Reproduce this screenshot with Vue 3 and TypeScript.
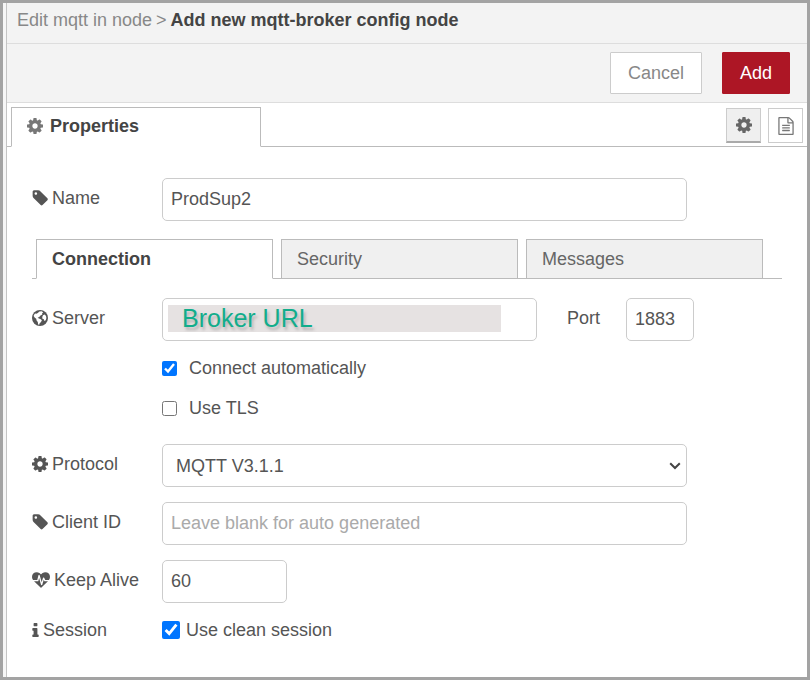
<script setup lang="ts">
import { ref } from 'vue'

const ICONS = {
  cog: 'M1152 896q0-106-75-181t-181-75-181 75-75 181 75 181 181 75 181-75 75-181zm512-109v222q0 12-8 23t-20 13l-185 28q-19 54-39 91 35 50 107 138 10 12 10 25t-9 23q-27 37-99 108t-94 71q-12 0-26-9l-138-108q-44 23-91 38-16 136-29 186-7 28-36 28h-222q-14 0-24.5-8.5t-11.5-21.5l-28-184q-49-16-90-37l-141 107q-10 9-25 9-14 0-25-11-126-114-165-168-7-10-7-23 0-12 8-23 15-21 51-66.5t54-70.5q-27-50-41-99l-183-27q-13-2-21-12.5t-8-23.5v-222q0-12 8-23t19-13l186-28q14-46 39-92-40-57-107-138-10-12-10-24 0-10 9-23 26-36 98.5-107.5t94.5-71.5q13 0 26 10l138 107q44-23 91-38 16-136 29-186 7-28 36-28h222q14 0 24.5 8.5t11.5 21.5l28 184q49 16 90 37l142-107q9-9 24-9 13 0 25 10 129 119 165 170 7 8 7 22 0 12-8 23-15 21-51 66.5t-54 70.5q26 50 41 98l183 28q13 2 21 12.5t8 23.5z',
  tag: 'M576 448q0-53-37.5-90.5t-90.5-37.5-90.5 37.5-37.5 90.5 37.5 90.5 90.5 37.5 90.5-37.5 37.5-90.5zm1067 576q0 53-37 90l-491 492q-39 37-91 37-53 0-90-37l-715-716q-38-37-64.5-101t-26.5-117v-416q0-52 38-90t90-38h416q53 0 117 26.5t102 64.5l715 714q37 39 37 91z',
  file: 'M1596 380q28 28 48 76t20 88v1152q0 40-28 68t-68 28h-1344q-40 0-68-28t-28-68v-1600q0-40 28-68t68-28h896q40 0 88 20t76 48zm-444-244v376h376q-10-29-22-41l-313-313q-12-12-41-22zm384 1528v-1024h-416q-40 0-68-28t-28-68v-416h-768v1536h1280zm-1024-864q0-14 9-23t23-9h704q14 0 23 9t9 23v64q0 14-9 23t-23 9h-704q-14 0-23-9t-9-23v-64zm736 224q14 0 23 9t9 23v64q0 14-9 23t-23 9h-704q-14 0-23-9t-9-23v-64q0-14 9-23t23-9h704zm0 256q14 0 23 9t9 23v64q0 14-9 23t-23 9h-704q-14 0-23-9t-9-23v-64q0-14 9-23t23-9h704z',
  info: 'M1216 1344v128q0 26-19 45t-45 19h-512q-26 0-45-19t-19-45v-128q0-26 19-45t45-19h64v-384h-64q-26 0-45-19t-19-45v-128q0-26 19-45t45-19h384q26 0 45 19t19 45v576h64q26 0 45 19t19 45zm-128-1152v192q0 26-19 45t-45 19h-256q-26 0-45-19t-19-45v-192q0-26 19-45t45-19h256q26 0 45 19t19 45z',
  heartbeat: 'M1280 1024h305q-5 6-10 10.5t-9 7.5l-3 4-623 600q-18 18-44 18t-44-18l-624-602q-5-2-21-20h369q22 0 39.5-13.5t22.5-34.5l70-281 190 667q6 20 23 33t39 13q21 0 38-13t23-33l146-485 56 112q18 35 57 35zm512-428q0 145-103 300h-369l-111-221q-8-17-25.5-27t-36.5-8q-45 5-56 46l-129 430-196-686q-6-20-23.5-33t-39.5-13-39 13.5-22 34.5l-116 464h-423q-103-155-103-300 0-220 127-344t351-124q62 0 126.5 21.5t120 58 95.5 68.5 76 68q36-36 76-68t95.5-68.5 120-58 126.5-21.5q224 0 351 124t127 344z',
}

const name = ref('ProdSup2')
const server = ref('Broker URL')
const port = ref('1883')
const autoConnect = ref(true)
const useTls = ref(false)
const protocol = ref('4')
const clientId = ref('')
const keepAlive = ref('60')
const cleanSession = ref(true)

const sections = ['Connection', 'Security', 'Messages']
const activeSection = ref('Connection')
</script>

<template>
  <main class="tray">
    <header class="breadcrumb">
      <span>Edit mqtt in node</span>
      <span>&gt;</span>
      <strong>Add new mqtt-broker config node</strong>
    </header>

    <div class="toolbar">
      <button type="button" class="btn">Cancel</button>
      <button type="button" class="btn primary">Add</button>
    </div>

    <nav class="editor-tabs">
      <button type="button" class="editor-tab">
        <svg class="icon" viewBox="128 128 1536 1536"><path :d="ICONS.cog" /></svg>
        Properties
      </button>
      <div class="tab-tools">
        <button type="button" class="tool selected" aria-label="Properties">
          <svg class="icon" viewBox="128 128 1536 1536"><path :d="ICONS.cog" /></svg>
        </button>
        <button type="button" class="tool" aria-label="Description">
          <svg class="icon doc" viewBox="128 0 1536 1792"><path :d="ICONS.file" /></svg>
        </button>
      </div>
    </nav>

    <form class="form" @submit.prevent>
      <div class="row">
        <label class="label" for="name">
          <svg class="icon" viewBox="64 128 1600 1536"><path :d="ICONS.tag" /></svg>Name
        </label>
        <input id="name" v-model="name" class="field wide" type="text" />
      </div>

      <div class="section-tabs">
        <button
          v-for="s in sections"
          :key="s"
          type="button"
          class="section-tab"
          :class="{ active: s === activeSection }"
          @click="activeSection = s"
        >{{ s }}</button>
      </div>

      <div class="row">
        <label class="label" for="server">
          <svg class="icon" viewBox="0 0 16 16">
            <circle cx="8" cy="8" r="8" />
            <path
              class="land"
              d="M7.400 1.600 9.600 1.300l1.600.9-1.200 1.200.4 1-1.900 1.200-1.500 1.600-1.400.2 1.200 1 1.600.6 1.500 1.300-.9 1.800-1.500 1.300-.4 1.600-1-.8-.3-2.200-1.200-1.400-.4-1.800-1.600-1.200-.9-1.600.2-.9 1.200-1.600 1.300.3 1.400-.9z M11 5.200l1.700-.8 1.300 1.600.4 2-.7 2.200-1.300.9-.6-1.900-1.600-.8.2-1.900z"
            />
          </svg>Server
        </label>
        <div class="field server-field">
          <input id="server" v-model="server" class="server-input" type="text" />
        </div>
        <label class="port-label" for="port">Port</label>
        <input id="port" v-model="port" class="field port" type="text" />
      </div>

      <div class="checks">
        <label class="check"><input v-model="autoConnect" type="checkbox" />Connect automatically</label>
        <label class="check"><input v-model="useTls" type="checkbox" />Use TLS</label>
      </div>

      <div class="row">
        <label class="label" for="protocol">
          <svg class="icon" viewBox="128 128 1536 1536"><path :d="ICONS.cog" /></svg>Protocol
        </label>
        <div class="select-wrap wide">
          <select id="protocol" v-model="protocol" class="field">
            <option value="3">MQTT V3.1 (legacy)</option>
            <option value="4">MQTT V3.1.1</option>
            <option value="5">MQTT V5</option>
          </select>
          <svg class="chevron" viewBox="0 0 12 8"><path d="M1.2 1.2 6 6l4.800-4.800" /></svg>
        </div>
      </div>

      <div class="row">
        <label class="label" for="client">
          <svg class="icon" viewBox="64 128 1600 1536"><path :d="ICONS.tag" /></svg>Client ID
        </label>
        <input id="client" v-model="clientId" class="field wide" type="text" placeholder="Leave blank for auto generated" />
      </div>

      <div class="row">
        <label class="label" for="keepalive">
          <svg class="icon heart" viewBox="0 128 1792 1536"><path :d="ICONS.heartbeat" /></svg>Keep Alive
        </label>
        <input id="keepalive" v-model="keepAlive" class="field short" type="text" />
      </div>

      <div class="row session-row">
        <label class="label" for="session">
          <svg class="icon info" viewBox="576 128 640 1408"><path :d="ICONS.info" /></svg>Session
        </label>
        <input id="session" v-model="cleanSession" class="session-box" type="checkbox" />
        <label for="session">Use clean session</label>
      </div>
    </form>
  </main>
</template>

<style>
body {
  margin: 0;
}
</style>

<style scoped>
.tray,
.tray * {
  box-sizing: border-box;
}

.tray {
  display: flex;
  flex-direction: column;
  min-height: 100vh;
  border: 3px solid #a3a3a3;
  background: linear-gradient(to right, #f6f6f6 3px, #c4c4c4 3px, #c4c4c4 4px, #fff 4px);
  padding-left: 4px;
  color: #555;
  font: 18px/24px "Liberation Sans", Arial, sans-serif;
}

button,
input,
select {
  margin: 0;
  color: inherit;
  font: inherit;
}

.icon {
  flex: none;
  width: 16px;
  height: 16px;
  fill: currentColor;
}

.breadcrumb {
  display: flex;
  gap: 4px;
  padding: 5px 10px 11px;
  border-bottom: 1px solid #ddd;
  background: #f3f3f3;
  color: #888;
}

.breadcrumb strong {
  color: #444;
}

.toolbar {
  display: flex;
  justify-content: flex-end;
  gap: 20px;
  padding: 8px 17px;
  border-bottom: 1px solid #ddd;
  background: #f3f3f3;
}

.btn {
  height: 42px;
  padding: 0 17px;
  border: 1px solid #ccc;
  border-radius: 1px;
  background: #fff;
  color: #888;
}

.btn.primary {
  border-color: #ad1625;
  background: #ad1625;
  color: #fff;
}

.editor-tabs {
  display: flex;
  justify-content: space-between;
  padding: 4px 4px 0;
  border-bottom: 1px solid #bbb;
}

.editor-tab {
  display: flex;
  align-items: center;
  gap: 7px;
  width: 250px;
  height: 40px;
  margin-bottom: -1px;
  padding: 0 15px 2px;
  border: 1px solid #bbb;
  border-bottom-color: #fff;
  background: #fff;
  color: #444;
  font-weight: bold;
}

.editor-tab .icon {
  color: #777;
}

.tab-tools {
  display: flex;
  gap: 7px;
  padding-top: 1px;
}

.tool {
  display: grid;
  place-items: center;
  width: 35px;
  height: 35px;
  padding: 0;
  border: 1px solid #ccc;
  background: #fff;
  color: #777;
}

.tool.selected {
  border-bottom: 2px solid #aaa;
  background: #efefef;
  color: #666;
}

.icon.doc {
  height: 18px;
}

.form {
  display: flex;
  flex-direction: column;
  gap: 15px;
  padding: 31px 25px;
}

.row {
  display: flex;
  align-items: center;
}

.label {
  display: flex;
  flex: none;
  align-items: center;
  gap: 4px;
  width: 130px;
  padding-bottom: 4px;
}

.icon.heart {
  width: 18px;
}

.icon.info {
  width: 7px;
  height: 14px;
}

.land {
  fill: #fff;
}

.field {
  height: 43px;
  padding: 0 8px;
  border: 1px solid #ccc;
  border-radius: 5px;
  background: #fff;
  outline: none;
}

.field::placeholder {
  color: #aaa;
  opacity: 1;
}

.wide {
  width: 70%;
}

.short {
  width: 125px;
}

.section-tabs {
  display: flex;
  gap: 8px;
  margin: 3px 0 4px;
  padding: 0 19px 0 4px;
  border-bottom: 1px solid #bbb;
}

.section-tab {
  flex: 1;
  height: 40px;
  margin-bottom: -1px;
  padding: 0 15px;
  border: 1px solid #bbb;
  background: #f0f0f0;
  color: #666;
  text-align: left;
}

.section-tab.active {
  border-bottom-color: #fff;
  background: #fff;
  color: #444;
  font-weight: bold;
}

.server-field {
  display: flex;
  align-items: flex-start;
  width: 50%;
  padding: 6px 5px;
}

.server-input {
  width: 333px;
  min-width: 0;
  height: 27px;
  padding: 0 14px;
  border: 0;
  background: #e6e2e2;
  color: #12ad8b;
  font-size: 25px;
  text-shadow: 2px 3px 3px #8888;
  outline: none;
}

.port-label {
  width: 59px;
  margin-left: 30px;
  padding-bottom: 4px;
}

.port {
  width: 68px;
}

.checks {
  display: flex;
  flex-direction: column;
  gap: 16px;
  padding-left: 130px;
  margin-bottom: 9px;
}

.check {
  display: flex;
  align-items: center;
  gap: 12px;
}

.check input {
  width: 15px;
  height: 15px;
}

.select-wrap {
  position: relative;
}

.select-wrap .field {
  width: 100%;
  padding: 0 13px;
  appearance: none;
}

.chevron {
  position: absolute;
  top: 18px;
  right: 6px;
  width: 12px;
  height: 8px;
  fill: none;
  stroke: #444;
  stroke-width: 2;
  pointer-events: none;
}

.session-row .label {
  padding: 0;
}

.session-box {
  width: 18px;
  height: 18px;
  margin-right: 6px;
}
</style>
